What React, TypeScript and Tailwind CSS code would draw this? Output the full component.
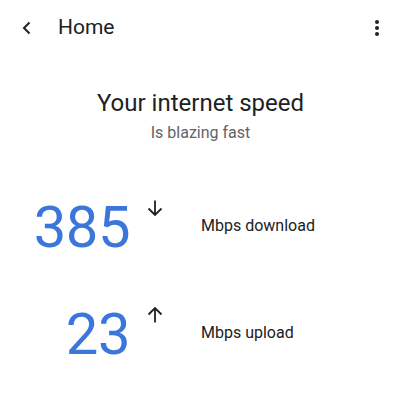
import React from "react";

function Row({ value, dir, label }: { value: string; dir: "down" | "up"; label: string }) {
  return (
    <div className="flex items-start">
      <div className="w-[130px] text-right text-[58px] leading-[58px] text-[#3b77db] tracking-[-0.5px]">{value}</div>
      <div className="w-[71px] pl-[17px] pt-[2px] text-[#202124]">
        <svg width="16" height="16" viewBox="0 0 16 16" fill="none" stroke="currentColor" strokeWidth="1.8">
          {dir === "down" ? (
            <path d="M8 0.5v14M1.5 8.5l6.5 6.5 6.5-6.5" />
          ) : (
            <path d="M8 15.5v-14M1.5 7.5l6.5-6.5 6.5 6.5" />
          )}
        </svg>
      </div>
      <div className="pt-[18px] text-[16px] leading-[20px] text-[#202124]">{label}</div>
    </div>
  );
}

export default function App() {
  return (
    <div className="w-[401px] h-[405px] bg-white" style={{ fontFamily: "Roboto, 'Open Sans', sans-serif" }}>
      <div className="flex items-center h-[55px] pl-[22px] pr-[22px]">
        <svg width="9" height="14" viewBox="0 0 9 14" fill="none" stroke="#202124" strokeWidth="2">
          <path d="M7.5 1.5 2 7l5.5 5.5" />
        </svg>
        <div className="ml-[27px] text-[21px] text-[#202124]">Home</div>
        <div className="ml-auto flex flex-col gap-[2px] items-center">
          <span className="w-[4px] h-[4px] rounded-full bg-[#202124]"></span>
          <span className="w-[4px] h-[4px] rounded-full bg-[#202124]"></span>
          <span className="w-[4px] h-[4px] rounded-full bg-[#202124]"></span>
        </div>
      </div>
      <div className="flex flex-col items-center mt-[32px]">
        <div className="text-[24px] leading-[32px] text-[#202124]">Your internet speed</div>
        <div className="text-[16px] leading-[20px] text-[#5f6368] mt-[4px]">Is blazing fast</div>
      </div>
      <div className="flex flex-col gap-[49px] mt-[55px]">
        <Row value="385" dir="down" label="Mbps download" />
        <Row value="23" dir="up" label="Mbps upload" />
      </div>
    </div>
  );
}
